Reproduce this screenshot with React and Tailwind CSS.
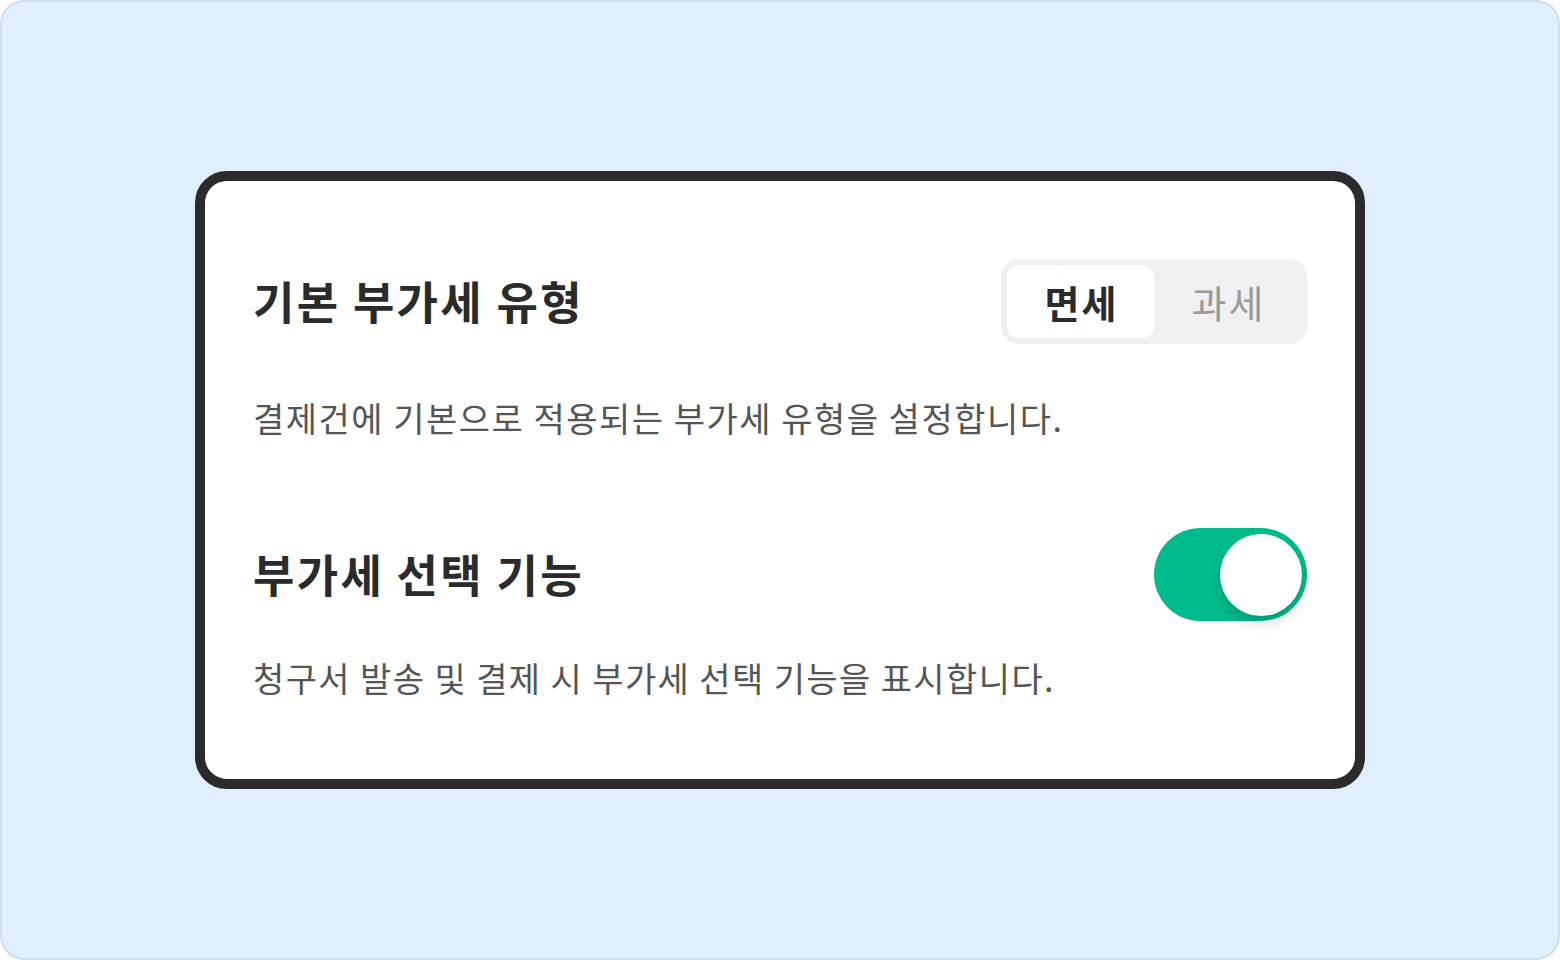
export default function App() {
  const font = { fontFamily: '"Noto Sans CJK KR", "Noto Sans", sans-serif' };
  return (
    <div className="w-[1560px] h-[960px] bg-white" style={font}>
      <div className="w-full h-full rounded-[24px] border-2 border-[#d0dfee] bg-[#e0effe] flex items-center justify-center">
        <div className="w-[1170px] rounded-[32px] border-[10px] border-[#2b2b2b] bg-white px-12 pt-[78px] pb-[77px]">
          <div className="flex items-center justify-between h-[85px]">
            <div className="text-[45px] font-bold text-[#2b2b2b] leading-none tracking-[2.3px] -mt-[3px]">기본 부가세 유형</div>
            <div className="flex w-[306px] h-[85px] rounded-[18px] bg-[#f0f0f0] p-[6px]">
              <div className="flex-1 flex items-center justify-center rounded-[12px] bg-white text-[38px] font-bold text-[#2b2b2b] tracking-[2px] pl-[2px]">면세</div>
              <div className="flex-1 flex items-center justify-center text-[38px] text-[#9a9a9a] tracking-[2px] pl-[2px]">과세</div>
            </div>
          </div>
          <div className="mt-[50px] text-[34px] leading-[48px] text-[#555555] tracking-[1.5px]">결제건에 기본으로 적용되는 부가세 유형을 설정합니다.</div>
          <div className="mt-[86px] flex items-center justify-between h-[93px]">
            <div className="text-[45px] font-bold text-[#2b2b2b] leading-none tracking-[2.3px] -mt-[3px]">부가세 선택 기능</div>
            <div className="w-[153px] h-[93px] rounded-full bg-[#00bc8c] flex items-center justify-end pr-[5px]">
              <div className="w-[82px] h-[82px] rounded-full bg-white shadow-[0_6px_14px_rgba(0,0,0,0.18)]" />
            </div>
          </div>
          <div className="mt-[33px] text-[34px] leading-[48px] text-[#555555] tracking-[1.4px]">청구서 발송 및 결제 시 부가세 선택 기능을 표시합니다.</div>
        </div>
      </div>
    </div>
  );
}
